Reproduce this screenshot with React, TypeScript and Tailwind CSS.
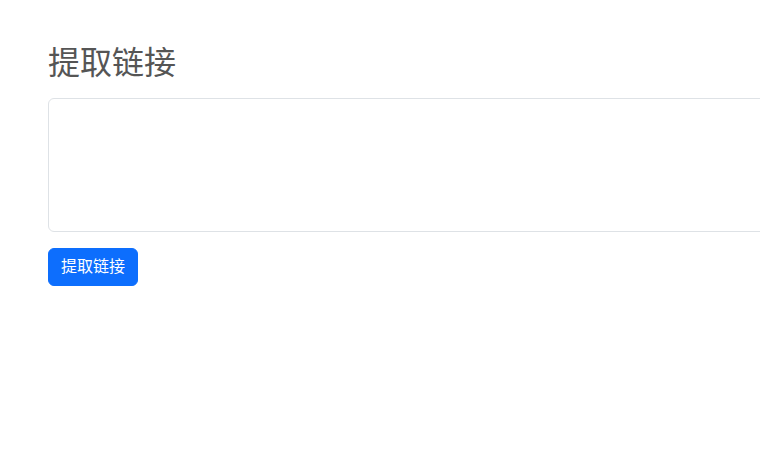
export default function App() {
  return (
    <div
      className="min-h-screen w-[760px] overflow-hidden bg-white"
      style={{ fontFamily: '"Liberation Sans", "Noto Sans CJK SC", sans-serif' }}
    >
      <div className="w-[1000px] pl-12 pt-[44px]">
        <h2 className="mb-[16px] text-[32px] leading-[1.2] font-normal text-[#555555]">
          提取链接
        </h2>
        <textarea className="block h-[134px] w-[900px] resize-none rounded-[6px] border border-[#dee2e6] bg-white px-3 py-[6px] outline-none" />
        <button className="mt-4 rounded-[6px] border border-[#0d6efd] bg-[#0d6efd] px-3 py-[6px] text-[16px] leading-[1.5] text-white">
          提取链接
        </button>
      </div>
    </div>
  );
}
